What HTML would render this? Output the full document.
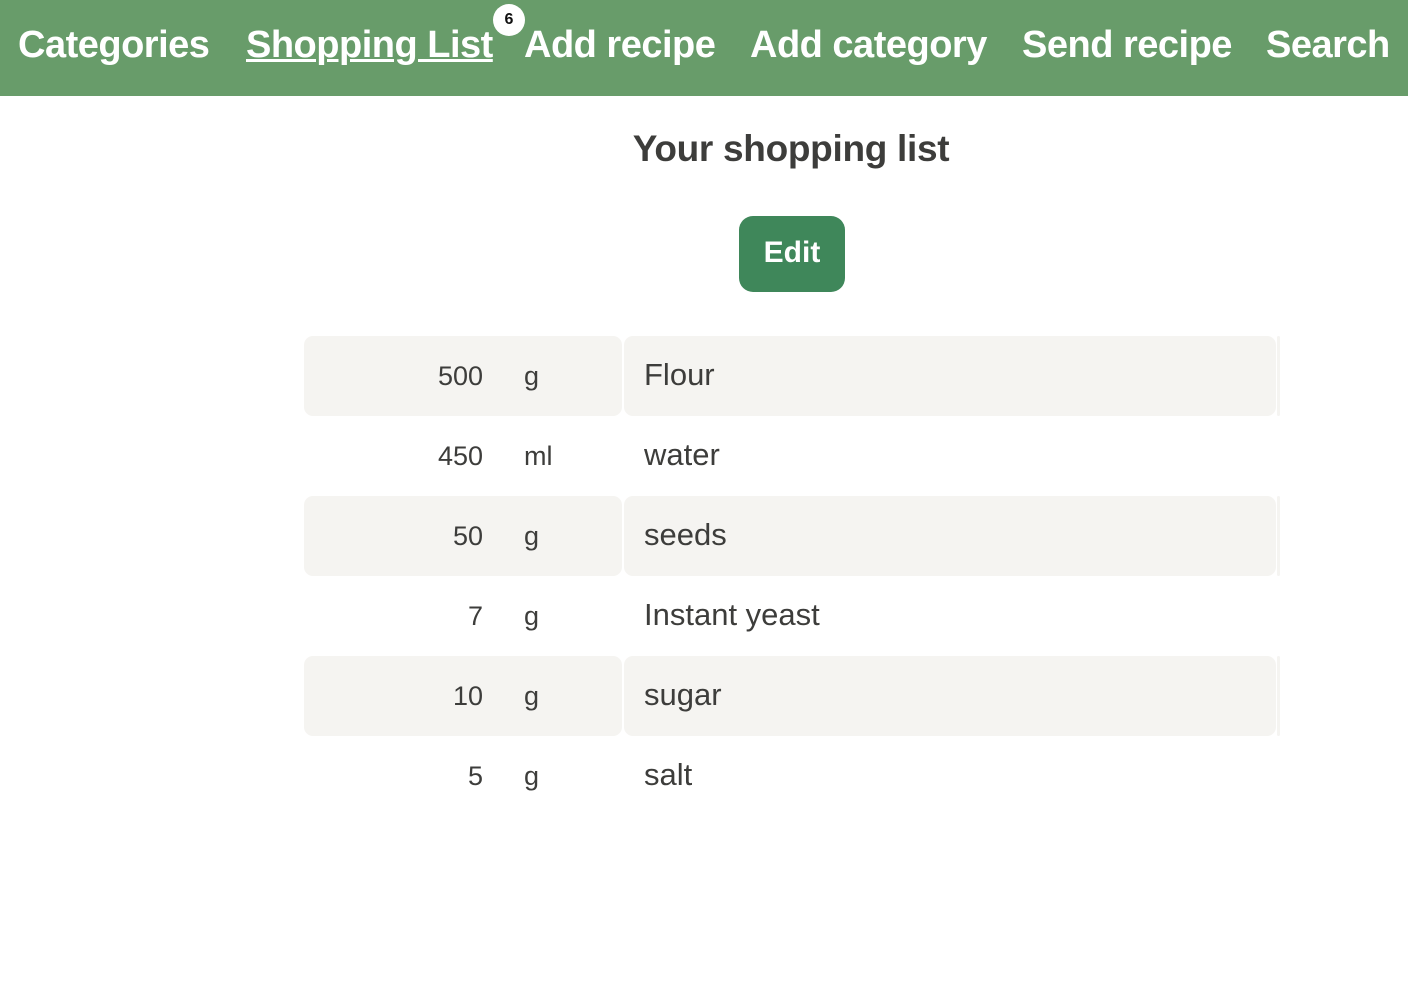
<!DOCTYPE html>
<html><head><style>
body{margin:0;background:#fff;font-family:"Liberation Sans",sans-serif;color:#3d3d3b;width:1408px;height:986px;overflow:hidden;position:relative}
.nav{position:absolute;left:0;top:0;width:1408px;height:96px;background:#689c6a}
.nav span{position:absolute;top:21px;color:#fff;font-weight:bold;font-size:38px;line-height:48px;white-space:nowrap;letter-spacing:-0.5px}
.badge{position:absolute;left:493px;top:4px;width:32px;height:32px;border-radius:50%;background:#fff;color:#111;font-weight:bold;font-size:16px;text-align:center;line-height:32px}
h1{position:absolute;top:127px;left:0;width:1582px;text-align:center;margin:0;font-size:37px;font-weight:bold;line-height:44px;letter-spacing:-0.3px}
.btn{position:absolute;left:739px;top:216px;width:106px;height:76px;border-radius:14px;background:#3f875a;color:#fff;font-weight:bold;font-size:30px;text-align:center;line-height:74px}
.row{position:absolute;left:304px;width:976px;height:80px}
.row.g .c1,.row.g .c2,.row.g .c3{background:#f5f4f1}
.c1{position:absolute;left:0;top:0;width:318px;height:80px;border-radius:9px}
.c2{position:absolute;left:320px;top:0;width:652px;height:80px;border-radius:9px}
.c3{position:absolute;left:973px;top:0;width:3px;height:80px;border-radius:2px}
.q{position:absolute;right:797px;top:22px;font-size:27px;line-height:36px}
.u{position:absolute;left:220px;top:22px;font-size:27px;line-height:36px}
.n{position:absolute;left:340px;top:19px;font-size:31px;line-height:40px}
</style></head><body>
<div class="nav">
<span style="left:18px">Categories</span>
<span style="left:246px;text-decoration:underline;text-decoration-thickness:3px">Shopping List</span>
<span style="left:524px">Add recipe</span>
<span style="left:750px">Add category</span>
<span style="left:1022px">Send recipe</span>
<span style="left:1266px">Search</span>
<div class="badge">6</div>
</div>
<h1>Your shopping list</h1>
<div class="btn">Edit</div>
<div class="row g" style="top:336px"><div class="c1"></div><div class="c2"></div><div class="c3"></div><div class="q">500</div><div class="u">g</div><div class="n">Flour</div></div>
<div class="row" style="top:416px"><div class="q">450</div><div class="u">ml</div><div class="n">water</div></div>
<div class="row g" style="top:496px"><div class="c1"></div><div class="c2"></div><div class="c3"></div><div class="q">50</div><div class="u">g</div><div class="n">seeds</div></div>
<div class="row" style="top:576px"><div class="q">7</div><div class="u">g</div><div class="n">Instant yeast</div></div>
<div class="row g" style="top:656px"><div class="c1"></div><div class="c2"></div><div class="c3"></div><div class="q">10</div><div class="u">g</div><div class="n">sugar</div></div>
<div class="row" style="top:736px"><div class="q">5</div><div class="u">g</div><div class="n">salt</div></div>
</body></html>
